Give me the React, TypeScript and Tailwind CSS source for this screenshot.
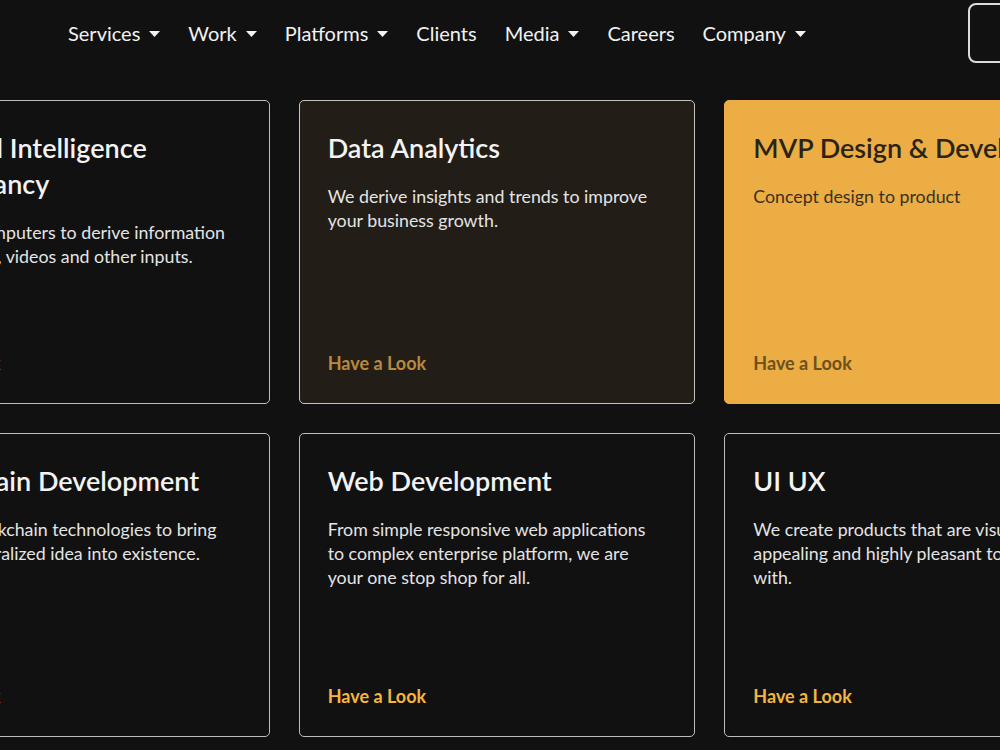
import React from "react";

const font = { fontFamily: '"Lato", "Noto Sans", sans-serif' };

function Caret() {
  return (
    <svg width="11" height="6" viewBox="0 0 11 6" className="ml-[9px] mt-[2px]">
      <path d="M0 0 L11 0 L5.5 6 Z" fill="#f2f2f2" />
    </svg>
  );
}

type CardProps = {
  title: React.ReactNode;
  desc: React.ReactNode;
  variant?: "dark" | "brown" | "gold";
};

function Card({ title, desc, variant = "dark" }: CardProps) {
  const base =
    variant === "gold"
      ? "bg-[#ecad44] border-[#ecad44]"
      : variant === "brown"
      ? "bg-[#221d17] border-[#c9c4bb]"
      : "bg-[#111111] border-[#bdbdbd]";
  const titleC = variant === "gold" ? "text-[#2a2418]" : "text-[#f3f3f3]";
  const descC = variant === "gold" ? "text-[#3a3020]" : "text-[#e4e4e4]";
  const linkC =
    variant === "gold"
      ? "text-[#6b5020]"
      : variant === "brown"
      ? "text-[#b98a3e]"
      : "text-[#f4b63f]";
  return (
    <div
      className={`h-[304px] rounded-[5px] border ${base} pl-[28px] pr-[24px] pt-[29px] pb-[28px] flex flex-col justify-between`}
    >
      <div>
        <h3 className={`text-[27px] leading-[36px] font-semibold ${titleC} whitespace-nowrap`}>{title}</h3>
        <p className={`mt-[18px] text-[17.8px] leading-[24px] ${descC}`}>{desc}</p>
      </div>
      <div className={`text-[18px] leading-[24px] font-bold ${linkC}`}>Have a Look</div>
    </div>
  );
}

export default function App() {
  const nav: [string, boolean][] = [
    ["Services", true],
    ["Work", true],
    ["Platforms", true],
    ["Clients", false],
    ["Media", true],
    ["Careers", false],
    ["Company", true],
  ];
  return (
    <div className="w-[1000px] h-[750px] bg-[#111111] overflow-hidden" style={font}>
      <header className="h-[66px] flex items-start relative">
        <nav className="flex items-center gap-[28px] pl-[68px] pt-[19px]">
          {nav.map(([label, caret]) => (
            <div key={label} className="flex items-center text-[20px] leading-[28px] text-[#f2f2f2]">
              <span>{label}</span>
              {caret && <Caret />}
            </div>
          ))}
        </nav>
        <div className="absolute left-[968px] top-[3px] w-[120px] h-[60px] rounded-[8px] border-2 border-[#dcdcdc]" />
      </header>
      <div className="mt-[34px] ml-[-127px] w-[1248px] grid grid-cols-3 gap-[29px]">
        <Card
          title={<>Artificial Intelligence<br />Consultancy</>}
          desc={<>Enabling computers to derive information<br />from images, videos and other inputs.</>}
        />
        <Card
          variant="brown"
          title="Data Analytics"
          desc={<>We derive insights and trends to improve<br />your business growth.</>}
        />
        <Card variant="gold" title="MVP Design & Development" desc="Concept design to product" />
        <Card
          title="Blockchain Development"
          desc={<>We use blockchain technologies to bring<br />your decentralized idea into existence.</>}
        />
        <Card
          title="Web Development"
          desc={<>From simple responsive web applications<br />to complex enterprise platform, we are<br />your one stop shop for all.</>}
        />
        <Card
          title="UI UX"
          desc={<>We create products that are visually<br />appealing and highly pleasant to interact<br />with.</>}
        />
      </div>
    </div>
  );
}
